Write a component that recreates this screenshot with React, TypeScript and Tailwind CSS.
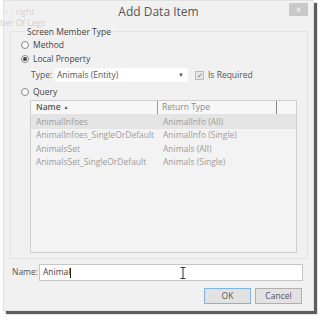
import React from 'react';

const ROWS = [
  { name: 'AnimalInfoes', type: 'AnimalInfo (All)', selected: true },
  { name: 'AnimalInfoes_SingleOrDefault', type: 'AnimalInfo (Single)' },
  { name: 'AnimalsSet', type: 'Animals (All)' },
  { name: 'AnimalsSet_SingleOrDefault', type: 'Animals (Single)' },
];

function Radio({ checked, label }: { checked?: boolean; label: string }) {
  return (
    <div className="flex items-center h-[14px] gap-[4px]">
      <span className="w-[8px] h-[8px] rounded-full border border-[#8a8a8a] bg-[#fbfbfb] flex items-center justify-center">
        {checked && <span className="w-[4px] h-[4px] rounded-full bg-[#444]" />}
      </span>
      <span className="text-[#444]">{label}</span>
    </div>
  );
}

export default function App() {
  return (
    <div
      className="relative w-[321px] h-[320px] bg-white overflow-hidden text-[8.5px] leading-none"
      style={{ fontFamily: '"Open Sans", "Noto Sans", sans-serif' }}
    >
      <div className="ml-[3px] w-[311px] h-[311px] bg-[#f1f1f1] border border-[#e2e2e2] shadow-[3px_3px_1px_rgba(40,40,40,0.75)] flex flex-col">
        {/* title bar */}
        <div className="relative h-[22px] flex items-center justify-center">
          <span className="text-[12px] text-[#555]">Add Data Item</span>
          <div className="absolute right-[5px] top-[2px] w-[19px] h-[13px] bg-[#c9c9c9] flex items-center justify-center text-white text-[9px]">
            ×
          </div>
        </div>

        {/* group box */}
        <fieldset className="ml-[6px] mt-[4px] w-[294px] h-[232px] border border-[#e3e3e3] px-[10px] pb-[4px]">
          <legend className="ml-[4px] px-[2px] text-[#444] text-[8.5px] leading-[9px]">Screen Member Type</legend>
          <div className="flex flex-col mt-[2px]">
            <Radio label="Method" />
            <Radio checked label="Local Property" />
            <div className="flex items-center h-[16px] ml-[10px] mt-[1px]">
              <span className="text-[#555] w-[24px]">Type:</span>
              <div className="w-[133px] h-[14px] bg-white flex items-center justify-between px-[2px] text-[#555]">
                <span>Animals (Entity)</span>
                <span className="text-[6px] mr-[2px]">▼</span>
              </div>
              <div className="ml-[7px] w-[9px] h-[9px] border border-[#bcbcbc] bg-[#e6e6e6] flex items-center justify-center text-[#777] text-[7px]">
                ✓
              </div>
              <span className="ml-[4px] text-[#555]">Is Required</span>
            </div>
            <div className="mt-[2px]">
              <Radio label="Query" />
            </div>

            {/* table */}
            <div className="ml-[9px] mt-[1px] w-[267px] h-[153px] border border-[#cfcfcf] bg-[#f3f3f3] flex flex-col">
              <div className="flex h-[14px] bg-[#f7f7f7] border-b border-[#e4e4e4] items-center">
                <div className="w-[127px] h-full flex items-center pl-[5px] border-r border-[#9a9a9a] text-[#555] font-semibold">
                  Name <span className="ml-[3px] text-[5px] font-normal">▲</span>
                </div>
                <div className="w-[119px] h-full flex items-center pl-[4px] border-r border-[#8a8a8a] text-[#8a8a8a]">
                  Return Type
                </div>
              </div>
              {ROWS.map((r) => (
                <div
                  key={r.name}
                  className={`flex h-[13.5px] items-center text-[#9c9c9c] ${r.selected ? 'bg-[#e4e4e4]' : ''}`}
                >
                  <span className="w-[127px] pl-[5px]">{r.name}</span>
                  <span className="pl-[5px]">{r.type}</span>
                </div>
              ))}
            </div>
          </div>
        </fieldset>

        {/* name row */}
        <div className="flex items-center mt-[5px] ml-[8px]">
          <span className="w-[27px] text-[#555]">Name:</span>
          <div className="relative w-[264px] h-[17px] bg-white border border-[#c6c6c6] flex items-center pl-[3px] text-[#444]">
            Animal<span className="w-px h-[10px] bg-[#222]" />
            <svg
              className="absolute left-[140px] top-[2px]"
              width="6"
              height="12"
              viewBox="0 0 6 12"
              fill="none"
              stroke="#333"
              strokeWidth="1"
            >
              <path d="M0.5 0.5h5M0.5 11.5h5M3 0.5v11" />
            </svg>
          </div>
        </div>

        {/* buttons */}
        <div className="flex justify-end gap-[4px] mt-[7px] mr-[11px]">
          <button className="w-[47px] h-[16px] bg-[#e2e2e2] border border-[#7fb4e8] text-[#555] text-[8.5px]">
            OK
          </button>
          <button className="w-[47px] h-[16px] bg-[#e2e2e2] border border-[#b0b0b0] text-[#555] text-[8.5px]">
            Cancel
          </button>
        </div>
      </div>

      {/* faded text left over from the window behind */}
      <div className="absolute left-[4px] top-[5px] flex items-center gap-[4px] text-[#d2d2d2] text-[8.5px]">
        <span>-</span>
        <span className="w-px h-[14px] bg-[#e6e6e6]" />
        <span>right</span>
      </div>
      <div className="absolute left-0 top-[18px] text-[#d0d0d0] text-[8.5px] leading-[9px]">ber Of Legs</div>
    </div>
  );
}
